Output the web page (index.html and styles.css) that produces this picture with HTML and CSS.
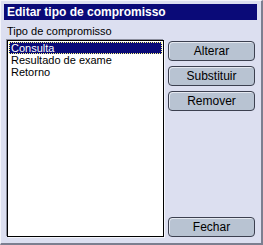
FILE: index.html
```html
<!DOCTYPE html>
<html lang="pt">
<head>
    <meta charset="UTF-8">
    <title>Editar tipo de compromisso</title>
    <link rel="stylesheet" href="styles.css">
</head>
<body>
    <div class="window">
        <div class="titlebar">Editar tipo de compromisso</div>
        <div class="content">
            <div class="list-col">
                <label class="list-label">Tipo de compromisso</label>
                <ul class="listbox">
                    <li class="selected">Consulta</li>
                    <li>Resultado de exame</li>
                    <li>Retorno</li>
                </ul>
            </div>
            <div class="button-col">
                <button class="btn">Alterar</button>
                <button class="btn">Substituir</button>
                <button class="btn">Remover</button>
                <button class="btn btn-close">Fechar</button>
            </div>
        </div>
    </div>
</body>
</html>
```

FILE: styles.css
```css
html, body {
    margin: 0;
    padding: 0;
}

body {
    width: 263px;
    height: 245px;
    font-family: 'Liberation Sans', Arial, sans-serif;
    font-size: 11px;
    background-color: #dcdff0;
}

.window {
    box-sizing: border-box;
    width: 263px;
    height: 245px;
    display: flex;
    flex-direction: column;
    padding: 3px 4px 4px 3px;
    border-top: 1px solid #f4f5fb;
    border-left: 1px solid #f4f5fb;
    border-right: 2px solid #7c7f90;
    border-bottom: 2px solid #7c7f90;
    background-color: #dcdff0;
}

.titlebar {
    height: 16px;
    line-height: 16px;
    padding-left: 3px;
    background-color: #0a0a78;
    color: #ffffff;
    font-weight: bold;
    font-size: 12px;
}

.content {
    flex: 1;
    display: flex;
    padding: 4px 2px 2px 3px;
}

.list-col {
    display: flex;
    flex-direction: column;
    width: 158px;
}

.list-label {
    color: #000;
    height: 14px;
    line-height: 14px;
    margin-bottom: 2px;
}

.listbox {
    flex: 1;
    margin: 0;
    padding: 1px;
    list-style: none;
    background-color: #ffffff;
    border: 1px solid #000;
    box-shadow: -1px -1px 0 #8a8d9c, 1px 1px 0 #f4f5fb;
}

.listbox li {
    height: 12px;
    line-height: 12px;
    padding-left: 2px;
    color: #000;
}

.listbox li.selected {
    background-color: #0a0a78;
    color: #ffffff;
    outline: 1px dotted #ffff80;
    outline-offset: -1px;
}

.button-col {
    flex: 1;
    display: flex;
    flex-direction: column;
    gap: 5px;
    padding: 17px 0 0 4px;
}

.btn {
    height: 20px;
    width: 87px;
    padding: 0;
    font-family: 'Liberation Sans', Arial, sans-serif;
    font-size: 12px;
    color: #000;
    background-color: #b8c3d2;
    border: 1px solid #3c4050;
    border-radius: 4px;
    box-shadow: inset 1px 1px 0 #e4e8f0;
}

.btn-close {
    margin-top: auto;
}
```
